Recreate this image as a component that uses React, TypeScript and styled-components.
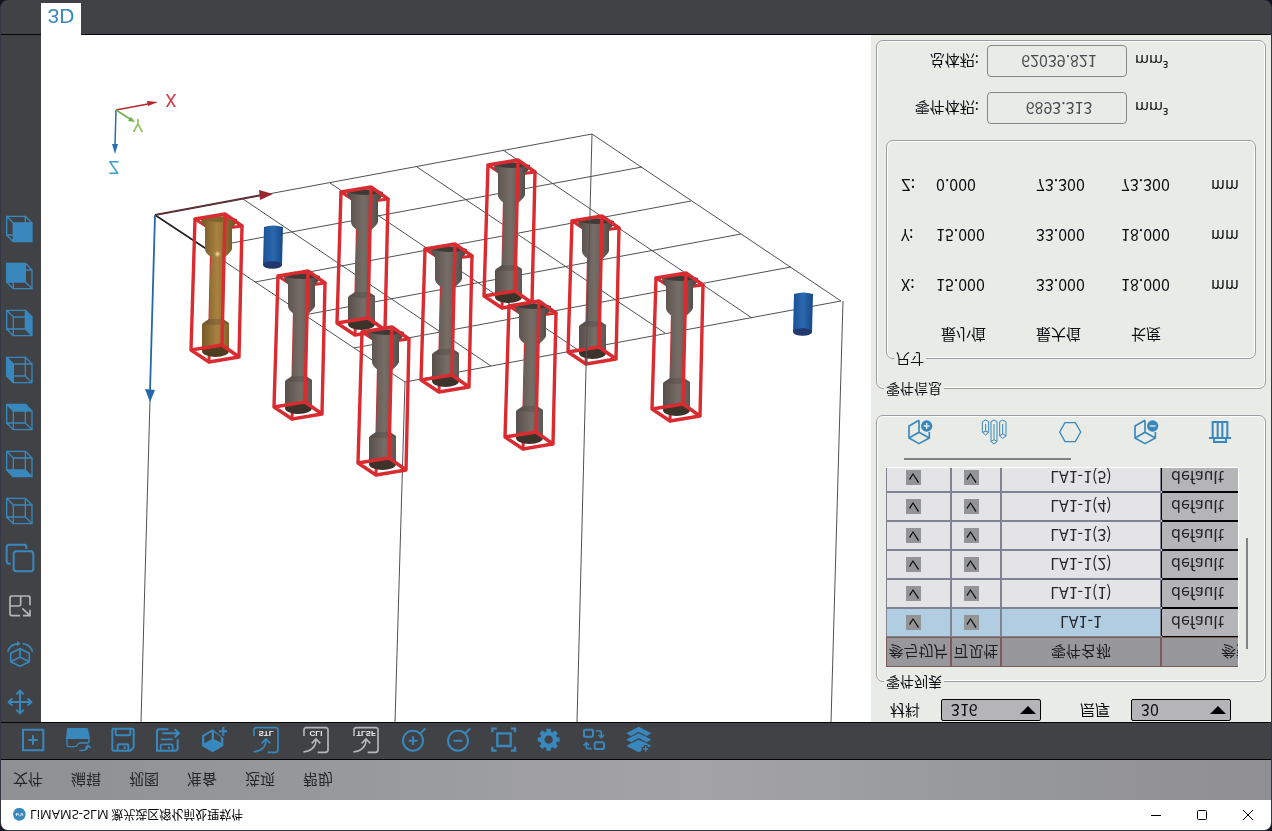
import React from "react";
import styled, { createGlobalStyle } from "styled-components";

const blue = "#3888bd";
const chrome = "#414246";
const panelBg = "#e9ebe7";
const pale = "#b4b6b9";

const Global = createGlobalStyle`
  * { box-sizing: border-box; }
  body { margin: 0; background: #10131f; }
  button, input, select { font: inherit; color: inherit; }
`;

/* The whole window is shown mirrored top to bottom. */
const Window = styled.div`
  display: flex;
  flex-direction: column;
  min-height: 100vh;
  transform: scaleY(-1);
  border: solid #343844;
  border-width: 1px 1px 0;
  border-radius: 8px;
  overflow: hidden;
  background: ${chrome};
  color: #0c0d10;
  font-family: "Noto Sans CJK SC", "Noto Sans", sans-serif;
  font-size: 15px;
  line-height: 20px;
`;

/* Drawings keep their own orientation inside the mirrored window. */
const Glyph = styled.svg<{ $size?: number }>`
  display: block;
  flex: none;
  width: ${(p) => p.$size ?? 28}px;
  height: ${(p) => p.$size ?? 28}px;
  transform: scaleY(-1);
  fill: none;
  stroke: currentColor;
  stroke-width: 6;
`;

const TitleBar = styled.header`
  display: flex;
  align-items: center;
  height: 30px;
  padding-left: 11px;
  background: #fff;
  color: #000;
  font-size: 12px;
`;

const AppName = styled.h1`
  flex: 1;
  margin: 0 0 0 3px;
  font-size: 12px;
  font-weight: 400;
`;

const LatinName = styled.span`
  font-family: "Open Sans", sans-serif;
  font-size: 13px;
`;

const WindowButton = styled.button`
  display: flex;
  align-items: center;
  justify-content: center;
  width: 46px;
  height: 30px;
  padding: 0;
  border: 0;
  background: none;
`;

const MenuBar = styled.nav`
  display: flex;
  align-items: center;
  gap: 28px;
  height: 40px;
  padding-left: 12px;
  background: linear-gradient(90deg, #8f9093 0%, #97989b 25%, #a4a4a6 55%, #9a9b9d 72%, #8f8f93 100%);
`;

const MenuButton = styled.button`
  padding: 0;
  border: 0;
  background: none;
  color: #26272a;
`;

const ToolBar = styled.div`
  display: flex;
  align-items: center;
  gap: 6px;
  height: 38px;
  padding: 1px 0 0 9px;
  border: solid #050505;
  border-width: 1px 0;
`;

const ToolGroup = styled.div`
  display: flex;
  & + & { margin-right: -6px; }
`;

const ToolButton = styled.button<{ $width?: number; $tone?: string }>`
  display: flex;
  align-items: center;
  justify-content: center;
  width: ${(p) => p.$width ?? 45}px;
  height: 35px;
  padding: 0;
  border: 0;
  background: none;
  color: ${(p) => p.$tone ?? blue};
`;

const Main = styled.main`
  display: flex;
  flex: 1;
`;

const SideBar = styled.div`
  display: flex;
  flex-direction: column;
  gap: 15px;
  width: 40px;
  padding: 4px 2px 0 0;
`;

const SideGroup = styled.div<{ $gap: number }>`
  display: flex;
  flex-direction: column;
  align-items: center;
  gap: ${(p) => p.$gap}px;
`;

const SideButton = styled.button<{ $tone?: string }>`
  padding: 0;
  border: 0;
  background: none;
  color: ${(p) => p.$tone ?? blue};
`;

const Viewport = styled.section`
  display: flex;
  flex: 1;
  min-width: 0;
  background: #fff;
`;

const SceneSvg = styled.svg`
  flex: 1;
  min-width: 0;
  width: 100%;
  transform: scaleY(-1);
  fill: none;
`;

const Panel = styled.aside`
  display: flex;
  flex-direction: column;
  width: 400px;
  padding: 1px 5px 5px;
  background: ${panelBg};
`;

const OptionRow = styled.div`
  display: flex;
  gap: 39px;
  padding-left: 14px;
  margin-bottom: 6px;
`;

const Option = styled.label`
  display: flex;
  flex: none;
  justify-content: space-between;
  width: 151px;
`;

const SelectBox = styled.span`
  position: relative;
  width: 100px;
  height: 22px;
  &::after {
    content: "";
    position: absolute;
    top: 7px;
    right: 5px;
    border: solid transparent;
    border-width: 8px 8px 0;
    border-top-color: #000;
    pointer-events: none;
  }
`;

const Select = styled.select<{ $height: number }>`
  appearance: none;
  display: block;
  width: 100%;
  height: ${(p) => p.$height}px;
  padding: 0 9px 2px;
  border: 1px solid #050505;
  border-radius: 2px;
  background: #b5b5b7;
  font-size: 16px;
  line-height: 18px;
`;

const Group = styled.fieldset`
  min-width: 0;
  margin: 0;
  padding: 0 9px;
  border: 1px solid #9b9da1;
  border-radius: 7px;
  box-shadow: inset 0 0 0 1px #fff;
`;

const InfoGroup = styled(Group)`
  flex: 1;
  margin-top: 15px;
`;

const Legend = styled.legend`
  height: 22px;
  margin-left: -2px;
  padding: 0 2px;
  background: ${panelBg};
  font-size: 14px;
  line-height: 20px;
`;

const TableArea = styled.div`
  display: flex;
  justify-content: space-between;
  padding: 4px 8px 0 0;
`;

const TableClip = styled.div`
  flex: none;
  width: 353px;
  height: 200px;
  overflow: hidden;
  border: solid #fff;
  border-width: 0 1px 1px 0;
`;

const ScrollThumb = styled.div`
  width: 2px;
  height: 111px;
  margin-top: 18px;
  background: #808285;
`;

const HScrollThumb = styled.div`
  width: 167px;
  height: 2px;
  margin: 7px 0 0 18px;
  background: #808285;
`;

const PartTable = styled.table`
  width: 425px;
  table-layout: fixed;
  border-spacing: 0;
`;

const Head = styled.th<{ $width: number }>`
  width: ${(p) => p.$width}px;
  height: 30px;
  padding: 0;
  border: 1px solid #7a5b56;
  background: #98979b;
  color: #1c1d20;
  font-weight: 400;
  white-space: nowrap;
`;

const Row = styled.tr<{ $active?: boolean }>`
  background: ${(p) => (p.$active ? "#b0cde2" : "#e4e4e7")};
`;

const Cell = styled.td<{ $kind?: "check" | "select" }>`
  height: 29px;
  padding: ${(p) => (p.$kind === "check" ? "0 10px 0 0" : p.$kind === "select" ? "0" : "0 0 2px")};
  border: ${(p) => (p.$kind === "select" ? "0" : "1px solid #808394")};
  color: #25262a;
  font-size: 16px;
  text-align: center;
`;

const Check = styled.input`
  appearance: none;
  display: block;
  width: 15px;
  height: 15px;
  margin: 0 auto;
  background: #939496;
  &:checked::before {
    content: "";
    display: block;
    width: 15px;
    height: 15px;
    background: #111;
    clip-path: polygon(3px 6px, 4px 5px, 7px 10px, 12px 2px, 13px 3px, 7px 12px);
  }
`;

const ActionRow = styled.div`
  display: flex;
  margin: 12px -2px 2px -5px;
`;

const ActionButton = styled.button`
  display: flex;
  flex: 1;
  justify-content: center;
  padding: 0;
  border: 0;
  background: none;
  color: ${blue};
`;

const SizeGroup = styled(Group)`
  margin: 8px 0 16px;
  padding: 0 14px 18px;
`;

const SizeLegend = styled(Legend)`
  margin-left: -7px;
`;

const SizeTable = styled.table`
  width: 100%;
  table-layout: fixed;
  border-spacing: 0;
  text-align: left;
`;

const SizeHead = styled.th<{ $width?: number; $indent?: number }>`
  width: ${(p) => (p.$width ? `${p.$width}px` : "auto")};
  height: 39px;
  padding: 0 0 14px ${(p) => p.$indent ?? 0}px;
  font-weight: 400;
`;

const SizeCell = styled.td<{ $unit?: boolean }>`
  height: 50px;
  padding: 0 0 4px;
  font-size: ${(p) => (p.$unit ? 15 : 16)}px;
`;

const VolumeRow = styled.label`
  display: grid;
  grid-template-columns: 93px 140px 1fr;
  gap: 8px;
  align-items: center;
  margin-bottom: 15px;
  &:last-child { margin-bottom: 4px; }
`;

const VolumeLabel = styled.span`
  text-align: right;
`;

const VolumeUnit = styled.span`
  font-family: "Noto Sans", sans-serif;
`;

const VolumeInput = styled.input`
  width: 100%;
  height: 32px;
  padding: 0 0 2px 4px;
  border: 1px solid #85878b;
  border-radius: 4px;
  background: ${panelBg};
  color: #4b4c50;
  font-size: 16px;
  text-align: center;
`;

const BottomBar = styled.footer`
  height: 35px;
  padding-left: 40px;
  border-top: 1px solid #050505;
`;

const ViewTab = styled.button`
  display: block;
  width: 40px;
  height: 32px;
  margin-top: -1px;
  padding: 6px 0 0;
  border: 0;
  background: #fff;
  color: ${blue};
  font-family: "Liberation Sans", sans-serif;
  font-size: 21px;
  line-height: 26px;
`;

type Draw = { name: string; box: string; art: React.ReactNode };

const disk = (
  <>
    <path d="M343 26H397Q402 26 402 31V82L392 92H343Q338 92 338 87V31Q338 26 343 26Z" />
    <path d="M348 27V42Q348 46 352 46H388Q392 46 392 42V27" />
    <path d="M354 92V78Q354 73 359 73H381Q386 73 386 78V92M375 79V87" />
  </>
);

const fileTools: Draw[] = [
  { name: "新建", box: "58 18 84 84", art: <path d="M70 29H131V91H70ZM86 60H114M100 46V74" /> },
  {
    name: "打开",
    box: "192 18 84 84",
    art: (
      <>
        <path d="M203 24H261Q263 24 264 27L270 54Q270 57 267 57H200Q197 57 198 54L201 27Z" fill="currentColor" stroke="none" />
        <path d="M201 55V76Q201 80 205 80H225Q230 80 232 75Q234 69 240 69H263Q267 69 267 64V56" strokeWidth="4" />
        <path d="M238 91Q262 94 264 78M256 84L264 76L272 84" strokeWidth="5" />
      </>
    ),
  },
  { name: "保存", box: "328 18 84 84", art: disk },
  {
    name: "另存为",
    box: "463 18 84 84",
    art: (
      <>
        <path d="M506 28H478Q472 28 472 34V92H526Q534 92 534 84V58" />
        <path d="M488 40H538M525 28L538 40L525 52" />
        <path d="M483 92V78Q483 73 488 73H514Q519 73 519 78V92M508 80V87M483 58H520" strokeWidth="5" />
      </>
    ),
  },
  {
    name: "添加零件",
    box: "600 18 84 84",
    art: (
      <>
        <path d="M641 28L609 46V78L641 97L673 78V54L641 28Z" fill="currentColor" stroke="none" />
        <path d="M638 36V58L616 70V49ZM645 36L665 50L667 68L645 58Z" fill={chrome} stroke="none" />
        <path d="M660 34H686M673 21V47" />
      </>
    ),
  },
];

const exportTools = [
  { label: "STL", tone: blue, size: 24 },
  { label: "CLI", tone: pale, size: 24 },
  { label: "TLSF", tone: pale, size: 23 },
];

const viewTools: Draw[] = [
  {
    name: "放大",
    box: "208 18 84 84",
    art: <><circle cx="247" cy="62" r="30" /><path d="M268 41L284 25M234 62H260M247 49V75" /></>,
  },
  {
    name: "缩小",
    box: "343 18 84 84",
    art: <><circle cx="382" cy="62" r="30" /><path d="M403 41L419 25M369 62H395" /></>,
  },
  {
    name: "适应窗口",
    box: "479 18 84 84",
    art: <path d="M486 37V26H499M542 26H554V37M554 80V92H542M499 92H486V80M501 40H541V78H501Z" strokeWidth="7" />,
  },
  {
    name: "设置",
    box: "614 18 84 84",
    art: (
      <>
        <circle cx="655" cy="59" r="19" strokeWidth="13" />
        {[0, 45, 90, 135].map((a) => (
          <path key={a} d="M655 26V37M655 81V92" strokeWidth="13" transform={`rotate(${a} 655 59)`} />
        ))}
      </>
    ),
  },
  {
    name: "交换",
    box: "749 18 84 84",
    art: (
      <>
        <rect x="761" y="29" width="27" height="21" rx="4" />
        <rect x="793" y="67" width="28" height="20" rx="4" />
        <path d="M797 33H808Q813 33 813 39V51M805 45L813 53L821 45M784 86H774Q768 86 768 80V69M760 76L768 68L776 76" strokeWidth="5" />
      </>
    ),
  },
  {
    name: "切片",
    box: "884 18 84 84",
    art: (
      <>
        <path
          d="M888 40L925 20L963 40L949 48L925 35L902 48ZM888 59L902 51L925 40L949 51L963 59L949 67L925 54L902 67ZM888 78L902 70L925 59L949 70L963 78L925 97Z"
          fill="currentColor"
          stroke="none"
        />
        <path d="M934 87H958M946 76V98" stroke={chrome} strokeWidth="12" />
        <path d="M938 87H954M946 79V95" strokeWidth="4" />
      </>
    ),
  },
];

const cubeFaces: { name: string; face: string }[] = [
  { name: "线框", face: "" },
  { name: "底面", face: "M8 66H64L84 86H28Z" },
  { name: "顶面", face: "M8 10H64L84 30H28Z" },
  { name: "左面", face: "M8 10L28 30V86L8 66Z" },
  { name: "右面", face: "M64 10L84 30V86L64 66Z" },
  { name: "后面", face: "M8 10H64V66H8Z" },
  { name: "前面", face: "M28 30H84V86H28Z" },
];

const motionTools: (Draw & { tone?: string })[] = [
  {
    name: "移动",
    box: "12 557 96 96",
    art: <path d="M26 605H94M60 571V639M37 594L26 605L37 616M83 594L94 605L83 616M49 582L60 571L71 582M49 628L60 639L71 628" />,
  },
  {
    name: "旋转",
    box: "12 414 96 96",
    art: (
      <>
        <path d="M60 446L88 460V485L60 499L32 485V460ZM60 446V471L32 485M60 471L88 485" strokeWidth="5" />
        <path d="M23 455Q29 432 56 431M68 431Q91 433 98 455" strokeWidth="5" />
        <path d="M51 423L62 431L51 439Z" fill="currentColor" stroke="none" />
      </>
    ),
  },
  {
    name: "缩放",
    box: "12 270 96 96",
    tone: pale,
    art: <path d="M60 347H36Q30 347 30 341V294Q30 288 36 288H84Q90 288 90 294V316M62 288V312Q62 318 56 318H30M67 325L89 346M90 329V347H69" strokeWidth="5" />,
  },
  {
    name: "复制",
    box: "12 126 96 96",
    art: (
      <>
        <rect x="41" y="154" width="59" height="60" rx="8" />
        <path d="M32 191H28Q20 191 20 183V142Q20 134 28 134H71Q79 134 79 142V147" />
      </>
    ),
  },
];

const openCube = "M147 47L117 64V100L147 117L178 100V82M147 47V83L117 100M147 83L178 100";

const partActions: Draw[] = [
  {
    name: "添加",
    box: "105 40 84 84",
    art: (
      <>
        <path d={openCube} strokeWidth="5" />
        <circle cx="170" cy="64" r="17" fill="currentColor" stroke="none" />
        <path d="M161 64H179M170 55V73" stroke={panelBg} strokeWidth="4" />
      </>
    ),
  },
  {
    name: "支撑",
    box: "334 40 84 84",
    art: (
      <path
        strokeWidth="3"
        d="M341 51L351 46L360 51V83L351 91L341 83ZM351 58V80L341 83M351 80L360 83M367 51L376 46L385 51V111L376 118L367 111ZM376 58V105L367 110M376 105L385 110M393 51L402 46L412 51V94L402 101L393 94ZM402 58V88L393 93M402 88L412 93"
      />
    ),
  },
  { name: "轮廓", box: "560 40 84 84", art: <path d="M571 82L587 54H618L634 82L618 111H587Z" strokeWidth="4" /> },
  {
    name: "移除",
    box: "105 40 84 84",
    art: (
      <>
        <path d={openCube} strokeWidth="5" />
        <circle cx="170" cy="64" r="17" fill="currentColor" stroke="none" />
        <path d="M161 64H179" stroke={panelBg} strokeWidth="4" />
      </>
    ),
  },
  {
    name: "排布",
    box: "1009 40 84 84",
    art: <path d="M1029 100V52H1073V100M1044 52V100M1058 52V100M1018 100H1084M1033 100V112H1069V100" strokeWidth="6" />,
  },
];

const DrawGlyph = ({ item, size }: { item: Draw; size?: number }) => (
  <Glyph $size={size} viewBox={item.box} aria-hidden="true">{item.art}</Glyph>
);

const frameBack = "M0 0L17 11L47 7M17 11L14 143";
const frameFront = "M0 0L30 -5L47 7L44 138L14 143L-4 131ZM-4 131L27 126L44 138M30 -5L27 126";
const barBody =
  "M6 0Q24 -6 42 0Q42 5 37 8V30Q36 33 30 38Q29 41 29 60L28 100L34 104V132H7V105L14 100L15 60Q16 40 16 38Q10 34 10 30V8Q6 5 6 0Z";

/* One tensile bar with its bounding frame; the first one is selected. */
const Bar = ({ x, y, gold }: { x: number; y: number; gold?: boolean }) => (
  <g transform={`translate(${x} ${y})`} strokeLinecap="round" strokeLinejoin="round">
    <path d={frameBack} stroke="#d92b30" strokeWidth="3" />
    <path d={barBody} fill={gold ? "url(#brass)" : "url(#steel)"} />
    <path d="M8 1Q24 5 40 1Q24 -6 8 1Z" fill={gold ? "#80632f" : "#403a36"} />
    {gold && <circle cx="22.500" cy="35" r="4" fill="url(#shine)" />}
    <path d="M7 104Q20 108 34 104L28 100H14Z" fill="#3a332e" opacity="0.25" />
    <ellipse cx="20.500" cy="132" rx="13.500" ry="6" fill={gold ? "#4f3d20" : "#3c332a"} />
    <path d={frameFront} stroke="#d92b30" strokeWidth="3.400" />
  </g>
);

const Pin = ({ x, y }: { x: number; y: number }) => (
  <g transform={`translate(${x} ${y})`}>
    <path d="M1 0Q10 -3 20 0L19 38H0Z" fill="url(#pin)" />
    <ellipse cx="9.500" cy="38" rx="9.500" ry="3.800" fill="#22386f" />
  </g>
);

const bars = [
  [488, 165], [341, 192], [572, 221], [425, 249], [278, 276], [656, 278], [509, 306], [362, 332],
];

const Scene = () => (
  <SceneSvg viewBox="41 35 830 687" preserveAspectRatio="xMinYMin meet" role="img" aria-label="3D">
    <defs>
      <linearGradient id="steel">
        <stop offset="0" stopColor="#554d48" /><stop offset="0.45" stopColor="#776d67" /><stop offset="0.75" stopColor="#625954" /><stop offset="1" stopColor="#47403c" />
      </linearGradient>
      <linearGradient id="brass">
        <stop offset="0" stopColor="#745728" /><stop offset="0.45" stopColor="#a9823f" /><stop offset="1" stopColor="#6a4f23" />
      </linearGradient>
      <linearGradient id="pin">
        <stop offset="0" stopColor="#1b4f95" /><stop offset="0.5" stopColor="#2a69ae" /><stop offset="1" stopColor="#184888" />
      </linearGradient>
      <radialGradient id="shine">
        <stop offset="0" stopColor="#fff0b8" /><stop offset="1" stopColor="#c79a4c" stopOpacity="0" />
      </radialGradient>
    </defs>
    <g stroke="#505154" strokeWidth="1">
      <path d="M155 215L592 134L841 301M205 248L642 167M255 282L691 201M304 315L741 234M354 348L791 267M405 382L841 301" />
      <path d="M155 215L405 382M243 199L491 366M330 183L578 350M417 167L665 333M503 150L752 318" />
      <path d="M150 400L141 722M405 382L395 722M843 301L831 722" />
    </g>
    <path d="M155 215L205 248" stroke="#222" strokeWidth="1.500" />
    <path d="M155 215L262 195" stroke="#5e3038" strokeWidth="1.800" />
    <path d="M259 190L273 194L260 200Z" fill="#962730" />
    <path d="M155 215L150 392" stroke="#2467ad" strokeWidth="1.800" />
    <path d="M145 389L155 390L150 402Z" fill="#2467ad" />
    <Bar x={195} y={219} gold />
    <Pin x={263} y={227} />
    {bars.map(([x, y]) => <Bar key={`${x}-${y}`} x={x} y={y} />)}
    <Pin x={793} y={294} />
    <path d="M592 134L577 722" stroke="#505154" strokeWidth="1" />

    <path d="M116 110L115 145" stroke="#2a6fb2" strokeWidth="1.500" />
    <path d="M112 144H118L115 154Z" fill="#2a6fb2" />
    <path d="M116 110L148 104" stroke="#b8262f" strokeWidth="1.500" />
    <path d="M147 101L158 102L148 106Z" fill="#b8262f" />
    <path d="M116 110L130 119" stroke="#6db24a" strokeWidth="1.500" />
    <path d="M131 117L135 122L128 121Z" fill="#6db24a" />
    <g fontFamily="Roboto, sans-serif" fontSize="18" textAnchor="middle">
      <text transform="translate(171 94) scale(1 -1)" fill="#d0404e">X</text>
      <text transform="translate(138 119) scale(1 -1)" fill="#8fc15f">Y</text>
      <text transform="translate(114 161) scale(1 -1)" fill="#3d9fd2">Z</text>
    </g>
  </SceneSvg>
);

const parts = ["LA1-1", "LA1-1(1)", "LA1-1(2)", "LA1-1(3)", "LA1-1(4)", "LA1-1(5)"];
const sizes = [
  ["X:", "15.000", "33.000", "18.000"],
  ["Y:", "15.000", "33.000", "18.000"],
  ["Z:", "0.000", "73.300", "73.300"],
];

export default function App() {
  return (
    <>
      <Global />
      <Window>
        <TitleBar>
          <Glyph $size={15} viewBox="0 0 45 45" aria-hidden="true">
            <circle cx="22" cy="22" r="19" fill={blue} stroke="none" />
            <path d="M13 18V26L18 19L22 26M25 28L30 18L33 26" stroke="#dcebf5" strokeWidth="3" />
          </Glyph>
          <AppName><LatinName>LiMAMS-SLM</LatinName> 激光选区熔化前处理软件</AppName>
          <WindowButton aria-label="最小化">
            <Glyph $size={12} viewBox="0 0 12 12"><path d="M1 6.500H11" strokeWidth="1" /></Glyph>
          </WindowButton>
          <WindowButton aria-label="最大化">
            <Glyph $size={12} viewBox="0 0 12 12"><rect x="1.500" y="1.500" width="9" height="9" rx="1" strokeWidth="1" /></Glyph>
          </WindowButton>
          <WindowButton aria-label="关闭">
            <Glyph $size={12} viewBox="0 0 12 12"><path d="M1 1L11 11M11 1L1 11" strokeWidth="1" /></Glyph>
          </WindowButton>
        </TitleBar>

        <MenuBar>
          {["文件", "编辑", "视图", "准备", "选项", "帮助"].map((m) => <MenuButton key={m}>{m}</MenuButton>)}
        </MenuBar>

        <ToolBar>
          <ToolGroup>
            {fileTools.map((t) => (
              <ToolButton key={t.name} aria-label={t.name}><DrawGlyph item={t} /></ToolButton>
            ))}
          </ToolGroup>
          <ToolGroup>
            {exportTools.map((t) => (
              <ToolButton key={t.label} $width={50} $tone={t.tone}>
                <Glyph viewBox="756 18 84 84">
                  <path
                    d="M762 48V30Q762 23 769 23H827Q834 23 834 30V89Q834 97 826 97H803M760 96Q797 92 798 60M785 70L798 57L811 70"
                    strokeWidth="5"
                  />
                  <text
                    transform="translate(798 32) scale(1 -1)"
                    fontFamily="Liberation Sans, sans-serif"
                    fontSize={t.size}
                    fontWeight="700"
                    textAnchor="middle"
                    fill="#eef0f2"
                    stroke="none"
                  >
                    {t.label}
                  </text>
                </Glyph>
              </ToolButton>
            ))}
          </ToolGroup>
          <ToolGroup>
            {viewTools.map((t) => (
              <ToolButton key={t.name} aria-label={t.name}><DrawGlyph item={t} /></ToolButton>
            ))}
          </ToolGroup>
        </ToolBar>

        <Main>
          <SideBar>
            <SideGroup $gap={16}>
              {motionTools.map((t) => (
                <SideButton key={t.name} aria-label={t.name} $tone={t.tone}><DrawGlyph item={t} size={32} /></SideButton>
              ))}
            </SideGroup>
            <SideGroup $gap={15}>
              {cubeFaces.map((c) => (
                <SideButton key={c.name} aria-label={c.name}>
                  <Glyph $size={32} viewBox="0 0 96 96">
                    {c.face && <path d={c.face} fill="currentColor" stroke="none" />}
                    <path d="M8 10H64V66H8ZM28 30H84V86H28ZM8 10L28 30M64 10L84 30M64 66L84 86M8 66L28 86" strokeWidth="4" />
                  </Glyph>
                </SideButton>
              ))}
            </SideGroup>
          </SideBar>

          <Viewport><Scene /></Viewport>

          <Panel>
            <OptionRow>
              <Option>
                材料
                <SelectBox><Select $height={22} defaultValue="316"><option>316</option></Select></SelectBox>
              </Option>
              <Option>
                层厚
                <SelectBox><Select $height={22} defaultValue="30"><option>30</option></Select></SelectBox>
              </Option>
            </OptionRow>

            <Group>
              <Legend>零件列表</Legend>
              <TableArea>
                <TableClip>
                  <PartTable>
                    <thead>
                      <tr>
                        <Head $width={65}>参与切片</Head>
                        <Head $width={50}>可见性</Head>
                        <Head $width={160}>零件名称</Head>
                        <Head $width={150}>参数</Head>
                      </tr>
                    </thead>
                    <tbody>
                      {parts.map((name, i) => (
                        <Row key={name} $active={i === 0}>
                          <Cell $kind="check"><Check type="checkbox" defaultChecked aria-label={`${name} 参与切片`} /></Cell>
                          <Cell $kind="check"><Check type="checkbox" defaultChecked aria-label={`${name} 可见性`} /></Cell>
                          <Cell>{name}</Cell>
                          <Cell $kind="select">
                            <Select $height={29} aria-label={`${name} 参数`} defaultValue="default"><option>default</option></Select>
                          </Cell>
                        </Row>
                      ))}
                    </tbody>
                  </PartTable>
                </TableClip>
                <ScrollThumb />
              </TableArea>
              <HScrollThumb />
              <ActionRow>
                {partActions.map((a) => (
                  <ActionButton key={a.name} aria-label={a.name}><DrawGlyph item={a} /></ActionButton>
                ))}
              </ActionRow>
            </Group>

            <InfoGroup>
              <Legend>零件信息</Legend>
              <SizeGroup>
                <SizeLegend>尺寸</SizeLegend>
                <SizeTable>
                  <thead>
                    <tr>
                      <SizeHead $width={35} aria-label="轴" />
                      <SizeHead $width={100} $indent={5}>最小值</SizeHead>
                      <SizeHead $width={85}>最大值</SizeHead>
                      <SizeHead $width={90} $indent={10}>长度</SizeHead>
                      <SizeHead aria-label="单位" />
                    </tr>
                  </thead>
                  <tbody>
                    {sizes.map(([axis, ...values]) => (
                      <tr key={axis}>
                        <SizeCell>{axis}</SizeCell>
                        {values.map((v, i) => <SizeCell key={i}>{v}</SizeCell>)}
                        <SizeCell $unit>mm</SizeCell>
                      </tr>
                    ))}
                  </tbody>
                </SizeTable>
              </SizeGroup>
              <VolumeRow>
                <VolumeLabel>零件体积:</VolumeLabel>
                <VolumeInput readOnly value="6893.313" />
                <VolumeUnit>mm³</VolumeUnit>
              </VolumeRow>
              <VolumeRow>
                <VolumeLabel>总体积:</VolumeLabel>
                <VolumeInput readOnly value="62039.821" />
                <VolumeUnit>mm³</VolumeUnit>
              </VolumeRow>
            </InfoGroup>
          </Panel>
        </Main>

        <BottomBar><ViewTab>3D</ViewTab></BottomBar>
      </Window>
    </>
  );
}
